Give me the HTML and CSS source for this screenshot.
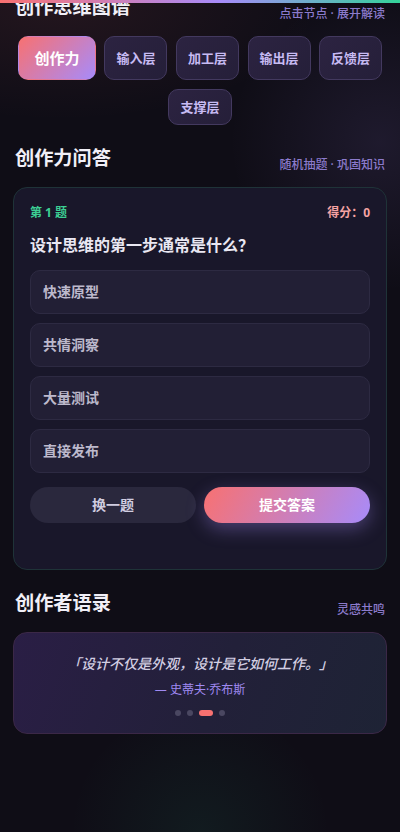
FILE: index.html
```html
<!DOCTYPE html>
<html lang="zh-CN">
<head>
<meta charset="utf-8">
<meta name="viewport" content="width=device-width, initial-scale=1">
<title>创作思维</title>
<link rel="stylesheet" href="styles.css">
</head>
<body>
<div class="top-bar"></div>
<main class="page">
  <section class="section">
    <div class="section-head">
      <h2 class="section-title">创作思维图谱</h2>
      <span class="section-sub">点击节点 · 展开解读</span>
    </div>
    <div class="nodes">
      <button class="node node-active">创作力</button>
      <button class="node">输入层</button>
      <button class="node">加工层</button>
      <button class="node">输出层</button>
      <button class="node">反馈层</button>
      <button class="node">支撑层</button>
    </div>
  </section>

  <section class="section">
    <div class="section-head">
      <h2 class="section-title">创作力问答</h2>
      <span class="section-sub">随机抽题 · 巩固知识</span>
    </div>
    <div class="quiz-card">
      <div class="quiz-meta">
        <span class="quiz-num">第 1 题</span>
        <span class="quiz-score">得分：0</span>
      </div>
      <p class="quiz-question">设计思维的第一步通常是什么？</p>
      <div class="options">
        <button class="option">快速原型</button>
        <button class="option">共情洞察</button>
        <button class="option">大量测试</button>
        <button class="option">直接发布</button>
      </div>
      <div class="actions">
        <button class="btn btn-ghost">换一题</button>
        <button class="btn btn-primary">提交答案</button>
      </div>
      <div class="feedback"></div>
    </div>
  </section>

  <section class="section">
    <div class="section-head">
      <h2 class="section-title">创作者语录</h2>
      <span class="section-sub">灵感共鸣</span>
    </div>
    <div class="quote-card">
      <p class="quote-text">「设计不仅是外观，设计是它如何工作。」</p>
      <p class="quote-author">— 史蒂夫·乔布斯</p>
      <div class="dots">
        <span class="dot"></span>
        <span class="dot"></span>
        <span class="dot dot-active"></span>
        <span class="dot"></span>
      </div>
    </div>
  </section>
</main>
</body>
</html>
```

FILE: styles.css
```css
* { box-sizing: border-box; }

html, body {
  margin: 0;
  padding: 0;
}

body {
  min-height: 100vh;
  overflow: hidden;
  background-color: #0f0d16;
  background-image:
    radial-gradient(ellipse 260px 120px at 15% 0%, rgba(248, 113, 113, 0.09), transparent 100%),
    radial-gradient(circle 150px at 95% 17%, rgba(167, 139, 250, 0.10), transparent 100%),
    radial-gradient(circle 130px at 50% 100%, rgba(52, 211, 153, 0.07), transparent 100%);
  background-attachment: fixed;
  font-family: "Noto Sans", "Noto Sans CJK SC", sans-serif;
  color: #e8e6f0;
  text-spacing-trim: space-all;
}

.top-bar {
  position: fixed;
  top: 0;
  left: 0;
  right: 0;
  height: 3px;
  background: linear-gradient(90deg, #f87171 0%, #a78bfa 55%, #34d399 100%);
  z-index: 10;
}

.page {
  padding: 0 13px;
  margin-top: -6px;
}

.section {
  margin-bottom: 20px;
}

.section-head {
  display: flex;
  justify-content: space-between;
  align-items: flex-end;
  padding: 0 2px;
  margin-bottom: 16px;
}

.section-title {
  margin: 0;
  font-size: 19.2px;
  line-height: 26px;
  font-weight: 700;
  color: #f1eff7;
}

.section-sub {
  font-size: 12px;
  line-height: 12px;
  font-weight: 500;
  color: #8c7bcc;
}

.nodes {
  display: flex;
  flex-wrap: wrap;
  justify-content: center;
  gap: 9px 8.5px;
}

.node {
  font-family: inherit;
  font-size: 13px;
  font-weight: 700;
  line-height: 18px;
  padding: 8px 11px;
  border-radius: 10px;
  border: 1px solid #43395f;
  background: linear-gradient(135deg, #2c2341, #251f39);
  color: #c7bbf3;
}

.node-active {
  font-size: 15px;
  padding: 12px 15.5px;
  border-color: transparent;
  background: linear-gradient(135deg, #f87171, #a78bfa);
  color: #ffffff;
}

.quiz-card {
  border-radius: 14px;
  border: 1px solid #1f3338;
  background: #19172a;
  padding: 16px;
}

.quiz-meta {
  display: flex;
  justify-content: space-between;
  font-size: 12px;
  line-height: 17px;
  font-weight: 700;
  margin-bottom: 12px;
}

.quiz-num { color: #3ccf94; }
.quiz-score { color: #f5a3a3; }

.quiz-question {
  margin: 0 0 13px;
  font-size: 16px;
  line-height: 24px;
  font-weight: 700;
  color: #e9e7f2;
}

.options {
  display: flex;
  flex-direction: column;
  gap: 9px;
}

.option {
  font-family: inherit;
  text-align: left;
  font-size: 14px;
  font-weight: 700;
  line-height: 20px;
  padding: 11px 12px;
  border-radius: 10px;
  border: 1px solid #2d2a42;
  background: #221f35;
  color: #bdb9cc;
}

.actions {
  display: flex;
  gap: 8px;
  margin-top: 14px;
}

.btn {
  flex: 1;
  font-family: inherit;
  font-size: 14px;
  font-weight: 700;
  line-height: 20px;
  padding: 8px 12px;
  border: none;
  border-radius: 18px;
}

.btn-ghost {
  background: #2a283d;
  color: #d0cde0;
}

.btn-primary {
  background: linear-gradient(120deg, #f87171, #a78bfa);
  color: #ffffff;
  box-shadow: 0 6px 18px rgba(167, 139, 250, 0.35);
}

.feedback {
  min-height: 18px;
  margin-top: 12px;
}

.quote-card {
  border-radius: 14px;
  border: 1px solid #3b2847;
  background: linear-gradient(110deg, #2a1e45 0%, #222039 55%, #1e2335 100%);
  padding: 20px 16px 17px;
  text-align: center;
}

.quote-text {
  margin: 0;
  font-size: 14px;
  line-height: 22px;
  font-style: italic;
  font-weight: 500;
  color: #d2cee2;
}

.quote-author {
  margin: 6px 0 0;
  font-size: 12px;
  line-height: 18px;
  color: #a08af2;
}

.dots {
  display: flex;
  justify-content: center;
  gap: 6px;
  margin-top: 11px;
}

.dot {
  width: 6px;
  height: 6px;
  border-radius: 3px;
  background: #4a4761;
}

.dot-active {
  width: 14px;
  background: #f87171;
}
```
